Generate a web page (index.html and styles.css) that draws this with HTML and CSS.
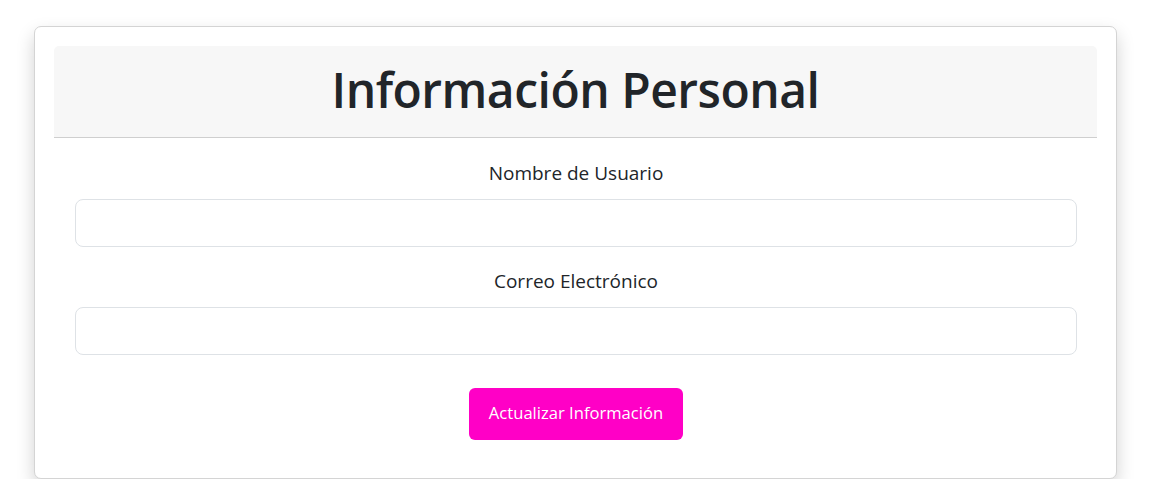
FILE: index.html
```html
<!DOCTYPE html>
<html lang="es">
<head>
<meta charset="utf-8">
<title>Información Personal</title>
<link rel="stylesheet" href="styles.css">
</head>
<body>
<div class="card">
  <div class="card-header">
    <h1 class="title">Información Personal</h1>
  </div>
  <form class="form">
    <div class="field">
      <label class="label" for="user">Nombre de Usuario</label>
      <input class="input" id="user" type="text">
    </div>
    <div class="field">
      <label class="label" for="mail">Correo Electrónico</label>
      <input class="input" id="mail" type="email">
    </div>
    <div class="actions">
      <button class="btn" type="button">Actualizar Información</button>
    </div>
  </form>
</div>
</body>
</html>
```

FILE: styles.css
```css
* { box-sizing: border-box; }
html, body { margin: 0; padding: 0; background: #fff; }
body {
  font-family: "Open Sans", "Noto Sans", sans-serif;
  color: #212529;
  padding: 26px 40px 0 34px;
}
.card {
  width: 1083px;
  height: 453px;
  border: 1px solid #d4d4d4;
  border-radius: 7px;
  background: #fff;
  padding: 19px;
  box-shadow: 0 8px 18px rgba(0, 0, 0, 0.18);
}
.card-header {
  height: 92px;
  padding-bottom: 4px;
  background: #f7f7f7;
  border-bottom: 1px solid #cfcfcf;
  border-radius: 5px 5px 0 0;
  display: flex;
  align-items: center;
  justify-content: center;
}
.title {
  margin: 0;
  font-size: 48px;
  font-weight: 600;
  line-height: 1.2;
  color: #212529;
  letter-spacing: -0.5px;
}
.form {
  padding: 22px 20px 0 21px;
}
.field {
  display: flex;
  flex-direction: column;
  align-items: center;
  margin-bottom: 21px;
}
.label {
  font-size: 19px;
  line-height: 27px;
  margin-bottom: 12px;
}
.input {
  width: 100%;
  height: 48px;
  border: 1px solid #dee2e6;
  border-radius: 8px;
  background: #fff;
  font: inherit;
}
.actions {
  display: flex;
  justify-content: center;
  padding-top: 12px;
}
.btn {
  width: 214px;
  height: 52px;
  padding: 0 0 3px;
  border: 0;
  border-radius: 6px;
  background: #ff00c6;
  color: #fff;
  font-family: inherit;
  font-size: 16.6px;
}
```
